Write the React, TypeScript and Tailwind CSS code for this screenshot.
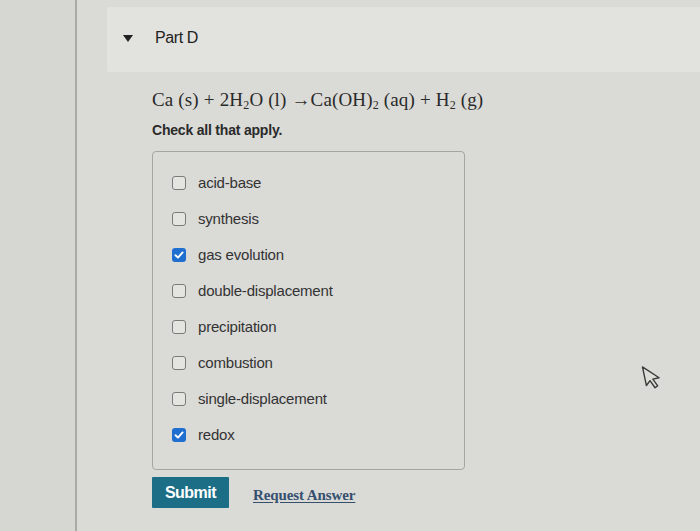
import React from 'react';

const OPTIONS: { label: string; checked: boolean }[] = [
  { label: 'acid-base', checked: false },
  { label: 'synthesis', checked: false },
  { label: 'gas evolution', checked: true },
  { label: 'double-displacement', checked: false },
  { label: 'precipitation', checked: false },
  { label: 'combustion', checked: false },
  { label: 'single-displacement', checked: false },
  { label: 'redox', checked: true },
];

const Box: React.FC<{ checked: boolean }> = ({ checked }) =>
  checked ? (
    <span className="w-[14px] h-[14px] rounded-[3px] bg-[#1f6fd1] flex items-center justify-center shrink-0">
      <svg width="10" height="10" viewBox="0 0 10 10">
        <path d="M1.5 5.2 L4 7.6 L8.6 2.4" fill="none" stroke="#fff" strokeWidth="1.9" strokeLinecap="round" strokeLinejoin="round" />
      </svg>
    </span>
  ) : (
    <span className="w-[14px] h-[14px] rounded-[3px] border-[1.5px] border-[#7a7a78] bg-[#e4e4e1] shrink-0" />
  );

const Sub: React.FC<{ children: React.ReactNode }> = ({ children }) => (
  <sub className="text-[12px]">{children}</sub>
);

const App: React.FC = () => {
  return (
    <div
      className="relative w-[700px] h-[531px] flex bg-[#dadad7] overflow-hidden text-[#2c2c2c]"
      style={{ fontFamily: '"Liberation Sans", Arial, sans-serif' }}
    >
      {/* left rail */}
      <div className="w-[77px] h-full bg-[#d6d6d3] border-r-2 border-[#a9a9a6] shrink-0" />

      <div className="flex-1 pt-[7px] pl-[30px]">
        {/* Part header */}
        <div className="h-[65px] bg-[#e2e2df] flex items-center pl-[16px] gap-[22px] rounded-l-[2px]">
          <svg width="10" height="7" viewBox="0 0 10 7" className="mt-[-3px]">
            <path d="M0 0 H10 L5 7 Z" fill="#222" />
          </svg>
          <span className="text-[16px] text-[#222] tracking-[-0.4px] mt-[-3px]">Part D</span>
        </div>

        <div className="pl-[45px] pt-[15px]">
          {/* equation */}
          <div
            className="text-[19px] text-[#2a2a2a] leading-[26px] tracking-[0.15px] whitespace-nowrap"
            style={{ fontFamily: '"Liberation Serif", "Times New Roman", serif' }}
          >
            Ca (s)<span className="mx-[5px]">+</span>2H<Sub>2</Sub>O (l) →Ca(OH)<Sub>2</Sub> (aq)
            <span className="mx-[5px]">+</span>H<Sub>2</Sub> (g)
          </div>

          <div className="mt-[8px] text-[14px] font-bold text-[#2a2a2a] leading-[18px] tracking-[-0.2px]">
            Check all that apply.
          </div>

          {/* options */}
          <div className="mt-[12px] w-[313px] h-[319px] border border-[#a5a5a2] rounded-[4px] pt-[13px] pl-[19px] flex flex-col">
            {OPTIONS.map((o) => (
              <label key={o.label} className="h-[36px] flex items-center gap-[12px] shrink-0">
                <Box checked={o.checked} />
                <span className="text-[15px] text-[#333] tracking-[-0.2px]">{o.label}</span>
              </label>
            ))}
          </div>

          {/* actions */}
          <div className="mt-[7px] flex items-center gap-[24px]">
            <button
              type="button"
              className="w-[77px] h-[31px] bg-[#1b6e86] text-white text-[16px] font-bold tracking-[-0.5px] rounded-[1px]"
            >
              Submit
            </button>
            <a
              className="mt-[6px] text-[15px] font-bold text-[#35506f] underline underline-offset-2 tracking-[-0.1px]"
              style={{ fontFamily: '"Liberation Serif", "Times New Roman", serif' }}
            >
              Request Answer
            </a>
          </div>
        </div>
      </div>

      {/* mouse pointer */}
      <svg
        className="absolute left-[643px] top-[364px] rotate-[-12deg]"
        width="20"
        height="28"
        viewBox="0 0 20 28"
      >
        <path
          d="M2 1 L2 20 L6.5 16 L10 24 L13 22.6 L9.6 15 L16 15 Z"
          fill="#dedeD9"
          stroke="#3a3a3a"
          strokeWidth="1.4"
          strokeLinejoin="round"
        />
      </svg>
    </div>
  );
};

export default App;
